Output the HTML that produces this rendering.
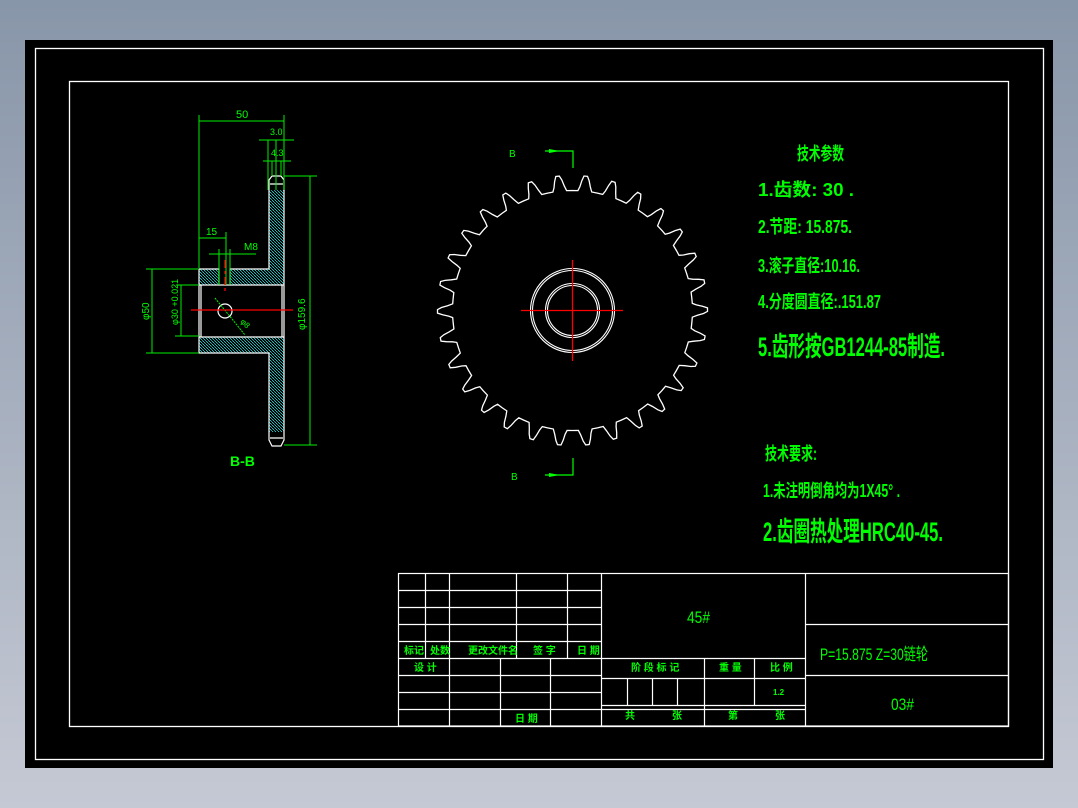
<!DOCTYPE html>
<html><head><meta charset="utf-8"><style>
html,body{margin:0;padding:0;}
body{width:1078px;height:808px;overflow:hidden;background:linear-gradient(#8896a9,#c5c9d4);position:relative;font-family:"Liberation Sans","Noto Sans CJK SC",sans-serif;}
svg{position:absolute;left:0;top:0;}
text{font-family:"Liberation Sans","Noto Sans CJK SC",sans-serif;fill:#00ff00;}
</style></head><body>
<svg width="1078" height="808" viewBox="0 0 1078 808">
<defs>
<pattern id="h" width="3" height="3" patternUnits="userSpaceOnUse">
<rect width="3" height="3" fill="#000"/>
<rect width="1" height="1" fill="#00cccc"/><rect x="2" y="2" width="1" height="1" fill="#00cccc"/><rect x="1" y="1" width="1" height="1" fill="#00aaaa"/>
</pattern>
</defs>
<rect x="25" y="40" width="1028" height="728" fill="#000"/>
<rect x="35.5" y="48.5" width="1008" height="711" fill="none" stroke="#fff" stroke-width="1.3"/>
<rect x="69.5" y="81.5" width="939" height="645" fill="none" stroke="#fff" stroke-width="1.3"/>

<g>
<path d="M199 269 H269 V190 H284 V432 H269 V353 H199 Z" fill="url(#h)"/>
<rect x="199" y="285" width="85" height="52" fill="#000"/>
<rect x="219" y="269" width="11" height="16" fill="#000"/>
<g fill="none" stroke="#fff" stroke-width="1.2">
<path d="M199 269 H219 V285 M230 285 V269 H269 V190 M269 432 V353 H199 V269 M199 285 H284 M199 337 H284 M201 285 V337 M282 285 V337 M284 190 V432"/>
<path d="M269 190 V180 L272 176 H281 L284 180 V190 M269 432 V440 L272 446 H281 L284 440 V432 M270 184 H283 M270 438 H283"/>
<circle cx="225" cy="311" r="7"/>
</g>
<g stroke="#00ee00" stroke-width="1" fill="none">
<path d="M199 115 V268 M284 115 V190 M199 121 H284 M259 140 H294 M268 140 V190 M276 140 V190 M263 161 H291 M272 161 V176 M281 161 V176"/>
<path d="M284 176 H317 M284 445 H317 M310 176 V445"/>
<path d="M146 269 H199 M146 353 H199 M152 269 V353 M176 285 H199 M175 336 H199 M181 285 V336"/>
<path d="M199 238 H226 M226 232 V285 M209 254 H256 M219 249 V285 M230 249 V285"/>
<path d="M215 298 L245 335" stroke-dasharray="2 1"/>
</g>
<g stroke="#ff0000" stroke-width="1.3">
<path d="M191 310 H293"/><path d="M225 260 V293" stroke-dasharray="8 3 3 3"/>
</g>
<text x="236" y="118" font-size="11">50</text>
<text x="270" y="135" font-size="9">3.0</text>
<text x="271" y="156" font-size="9">4.3</text>
<text x="206" y="235" font-size="10">15</text>
<text x="244" y="250" font-size="10">M8</text>
<text x="230" y="466" font-size="14" font-weight="bold">B-B</text>
<text font-size="10" transform="translate(149,320) rotate(-90)">φ50</text>
<text font-size="9" transform="translate(178,325) rotate(-90)">φ30 +0.021</text>
<text font-size="10" transform="translate(305,330) rotate(-90)">φ159.6</text>
<text font-size="8" transform="translate(240,322) rotate(45)">φ8</text>
</g>

<path id="gear" fill="none" stroke="#fff" stroke-width="1.3"/>
<g fill="none" stroke="#fff" stroke-width="1.1">
<circle cx="572.5" cy="310.5" r="42"/><circle cx="572.5" cy="310.5" r="40"/>
<circle cx="572.5" cy="310.5" r="27"/><circle cx="572.5" cy="310.5" r="25"/>
</g>
<g stroke="#ff0000" stroke-width="1.3"><path d="M521 310.5 H623 M572.5 260 V361"/></g>
<g stroke="#00ff00" stroke-width="1.2" fill="none">
<path d="M545 151 H573 V168 M545 475 H573 V458"/>
</g>
<path d="M549 149 L560 151 L549 153Z M549 473 L560 475 L549 477Z" fill="#00ff00"/>
<text x="509" y="157" font-size="10">B</text>
<text x="511" y="480" font-size="10">B</text>

<g font-size="18" font-weight="bold">
<text x="797" y="160" textLength="47" lengthAdjust="spacingAndGlyphs">技术参数</text>
<text x="758" y="196" textLength="96" lengthAdjust="spacingAndGlyphs">1.齿数: 30  .</text>
<text x="758" y="233" textLength="94" lengthAdjust="spacingAndGlyphs">2.节距: 15.875.</text>
<text x="758" y="272" textLength="102" lengthAdjust="spacingAndGlyphs">3.滚子直径:10.16.</text>
<text x="758" y="308" textLength="123" lengthAdjust="spacingAndGlyphs">4.分度圆直径:.151.87</text>
<text x="758" y="356" font-size="27" textLength="187" lengthAdjust="spacingAndGlyphs">5.齿形按GB1244-85制造.</text>
<text x="765" y="460" textLength="52" lengthAdjust="spacingAndGlyphs">技术要求:</text>
<text x="763" y="497" textLength="137" lengthAdjust="spacingAndGlyphs">1.未注明倒角均为1X45°  .</text>
<text x="763" y="541" font-size="27" textLength="180" lengthAdjust="spacingAndGlyphs">2.齿圈热处理HRC40-45.</text>
</g>

<g stroke="#fff" stroke-width="1.2" fill="none">
<rect x="398.5" y="573.5" width="610" height="152.5"/>
<path d="M398 590.5 H601 M398 607.5 H601 M398 624.5 H601 M398 641.5 H601 M398 658.5 H805 M398 675.5 H601 M398 692.5 H601 M398 709.5 H805"/>
<path d="M425.5 573 V658 M449.5 573 V726 M516.5 573 V658 M567.5 573 V658 M601.5 573 V726 M805.5 573 V726"/>
<path d="M500.5 658 V726 M550.5 658 V726"/>
<path d="M601 678.5 H805 M601 705.5 H805 M704.5 658 V726 M754.5 658 V705 M627.5 678 V705 M652.5 678 V705 M677.5 678 V705"/>
<path d="M805 624.5 H1008 M805 675.5 H1008"/>
</g>
<g font-size="10" font-weight="bold">
<text x="404" y="654">标记</text><text x="430" y="654">处数</text><text x="468" y="654">更改文件名</text>
<text x="533" y="654">签 字</text><text x="577" y="654">日 期</text>
<text x="414" y="671">设 计</text><text x="515" y="722">日 期</text>
<text x="631" y="671">阶 段 标 记</text><text x="719" y="671">重 量</text><text x="770" y="671">比 例</text>
<text x="773" y="695" font-size="8">1.2</text>
<text x="625" y="719">共</text><text x="672" y="719">张</text><text x="728" y="719">第</text><text x="775" y="719">张</text>
</g>
<text x="687" y="623" font-size="17" textLength="23" lengthAdjust="spacingAndGlyphs">45#</text>
<text x="820" y="660" font-size="17" textLength="108" lengthAdjust="spacingAndGlyphs">P=15.875  Z=30链轮</text>
<text x="891" y="710" font-size="17" textLength="23" lengthAdjust="spacingAndGlyphs">03#</text>
</svg>
<script>
(function(){
var cx=572.5,cy=310.5,R0=120,R1=135,d='';
function P(r,a){a=(a-90)*Math.PI/180;return (cx+r*Math.cos(a)).toFixed(1)+' '+(cy+r*Math.sin(a)).toFixed(1);}
for(var k=0;k<30;k++){
 var a=-6+12*k;
 var pts=[[R0,a-6],[R0,a-3.4],[124,a-2.6],[130,a-1.9],[R1,a-1.1],[R1,a+0.4],[131,a+1.3],[125,a+2.2],[R0,a+3.2]];
 pts.forEach(function(p,i){d+=(k==0&&i==0?'M':'L')+P(p[0],p[1]);});
}
d+='Z';
document.getElementById('gear').setAttribute('d',d);
})();
</script>
</body></html>
